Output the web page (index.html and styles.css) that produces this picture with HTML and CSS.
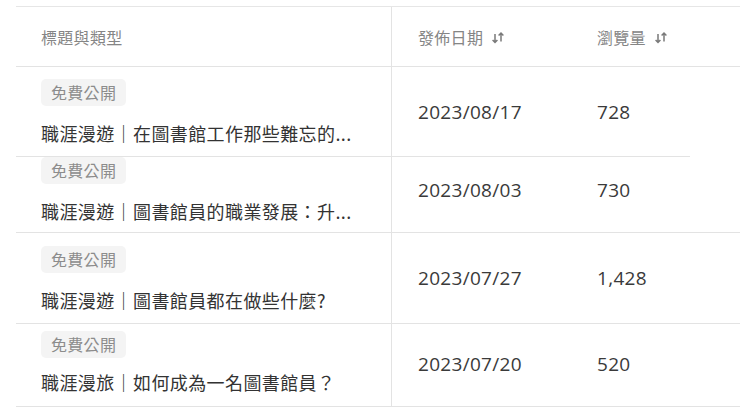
FILE: index.html
```html
<!DOCTYPE html>
<html lang="zh-Hant">
<head>
<meta charset="utf-8">
<link rel="stylesheet" href="styles.css">
</head>
<body>
<div class="table">
  <div class="head">
    <div class="cell cell--title"><span class="head__label">標題與類型</span></div>
    <div class="cell cell--date"><span class="head__label">發佈日期</span><svg class="sort" viewBox="0 0 14 13" width="14" height="13"><path d="M4 3v8.5M1.6 9 4 11.5 6.4 9M10 10.5V2M7.6 4.5 10 2l2.4 2.5" stroke="#7a7a7a" stroke-width="1.5" fill="none"/></svg></div>
    <div class="cell cell--views"><span class="head__label">瀏覽量</span><svg class="sort" viewBox="0 0 14 13" width="14" height="13"><path d="M4 3v8.5M1.6 9 4 11.5 6.4 9M10 10.5V2M7.6 4.5 10 2l2.4 2.5" stroke="#7a7a7a" stroke-width="1.5" fill="none"/></svg></div>
  </div>

  <div class="row row--first">
    <div class="row__inner">
      <div class="cell cell--title">
        <span class="tag">免費公開</span>
        <span class="title">職涯漫遊｜在圖書館工作那些難忘的...</span>
      </div>
      <div class="cell cell--date num">2023/08/17</div>
      <div class="cell cell--views num">728</div>
    </div>
  </div>

  <div class="row row--second">
    <div class="row__inner">
      <div class="cell cell--title">
        <span class="tag">免費公開</span>
        <span class="title">職涯漫遊｜圖書館員的職業發展：升...</span>
      </div>
      <div class="cell cell--date num">2023/08/03</div>
      <div class="cell cell--views num">730</div>
    </div>
  </div>

  <div class="row row--third">
    <div class="row__inner">
      <div class="cell cell--title">
        <span class="tag">免費公開</span>
        <span class="title">職涯漫遊｜圖書館員都在做些什麼?</span>
      </div>
      <div class="cell cell--date num">2023/07/27</div>
      <div class="cell cell--views num">1,428</div>
    </div>
  </div>

  <div class="row row--fourth">
    <div class="row__inner">
      <div class="cell cell--title">
        <span class="tag">免費公開</span>
        <span class="title">職涯漫旅｜如何成為一名圖書館員？</span>
      </div>
      <div class="cell cell--date num">2023/07/20</div>
      <div class="cell cell--views num">520</div>
    </div>
  </div>
</div>
</body>
</html>
```

FILE: styles.css
```css
* { box-sizing: border-box; }

html, body {
  margin: 0;
  padding: 0;
  background: #ffffff;
}

body {
  font-family: "Noto Sans CJK TC", "Noto Sans", sans-serif;
  color: #333333;
  overflow: hidden;
}

.table {
  margin: 6px 0 0 16px;
  border-top: 1px solid #e6e6e6;
  border-bottom: 1px solid #e3e3e3;
}

.head {
  display: flex;
  height: 60px;
  border-bottom: 1px solid #e3e3e3;
}

.cell {
  display: flex;
  align-items: center;
}

.cell--title {
  width: 376px;
  flex: none;
  padding-left: 25px;
  border-right: 1px solid #e3e3e3;
}

.cell--date {
  width: 205px;
  flex: none;
  padding-left: 26px;
}

.cell--views {
  flex: 1;
}

.head__label {
  font-size: 16px;
  line-height: 20px;
  color: #858585;
  letter-spacing: 0.3px;
}

.sort {
  margin-left: 8px;
  margin-top: 1px;
}

.cell--views .sort {
  margin-left: 8px;
}

.row {
  overflow: hidden;
}

.row + .row {
  border-top: 1px solid #e3e3e3;
}

.row__inner {
  display: flex;
  height: 89px;
}

.row .cell--title {
  flex-direction: column;
  align-items: flex-start;
  justify-content: flex-start;
  padding-top: 12px;
}

.row--first { height: 89px; }

.row--second {
  height: 76px;
}
.row + .row--second {
  border-top: none;
  padding-top: 1px;
  background: linear-gradient(#e3e3e3, #e3e3e3) left top / 674px 1px no-repeat;
}
.row--second .row__inner { margin-top: -12px; }

.row--third { height: 91px; }
.row--third .row__inner { height: 90px; }
.row--third .cell--title { padding-top: 13px; }

.row--fourth { height: 83px; }
.row--fourth .row__inner { margin-top: -5px; }
.row--fourth .title { margin-top: 11px; }

.tag {
  display: inline-block;
  height: 27px;
  line-height: 27px;
  padding: 0 10px;
  border-radius: 5px;
  background: #f4f4f4;
  color: #8c8c8c;
  font-size: 16px;
  letter-spacing: 0.3px;
}

.title {
  margin-top: 14px;
  font-size: 18px;
  line-height: 26px;
  color: #333333;
  letter-spacing: 0.4px;
  white-space: nowrap;
}

.num {
  font-family: "Open Sans", "Noto Sans", sans-serif;
  font-size: 19px;
  color: #3a3a3a;
  letter-spacing: 0.3px;
}
```
